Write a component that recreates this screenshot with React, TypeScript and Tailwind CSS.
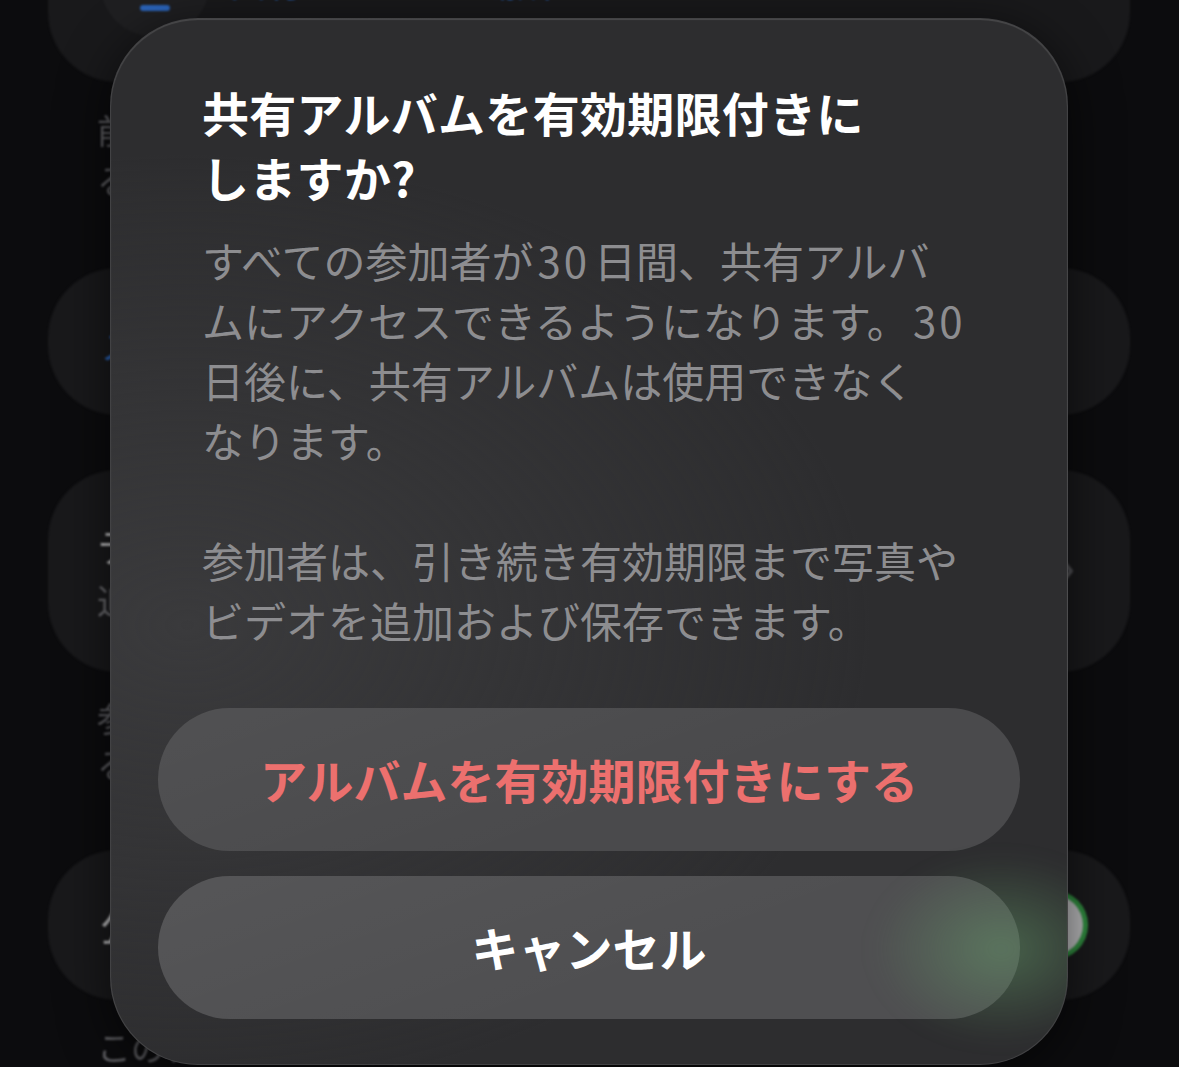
import React from 'react';

const jp = "font-['Noto_Sans_CJK_JP','Noto_Sans',sans-serif]";

const bodySecond = ['参加者は、引き続き有効期限まで写真や', 'ビデオを追加および保存できます。'];

function Background() {
  return (
    <div className="flex flex-col ml-[48px] mr-[49px] blur-[1px]">
      {/* Card 1, mostly off screen */}
      <div className="mt-[-80px] h-[162px] rounded-[70px] bg-[#19191b] flex items-start gap-5 pl-[52px] pt-[7px]">
        <div className="w-[110px] h-[110px] rounded-full bg-[#1f1f21] flex items-center justify-center">
          <div className="w-[30px] h-[6px] mt-[52px] rounded bg-[#2a63b8]" />
        </div>
        <span className="mt-[34px] text-[36px] leading-[40px] text-[#2a63b8] whitespace-nowrap">共有アルバムの場所</span>
      </div>

      {/* Footer 1 */}
      <div className="mt-[23px] pl-[49px] text-[34px] leading-[50px] text-[#5e5e62] whitespace-nowrap">
        <p>前回の共有から参加者が変更されてい</p>
        <p>る場合があります。</p>
      </div>

      {/* Card 2 */}
      <div className="mt-[63px] h-[147px] rounded-[70px] bg-[#19191b] flex items-center pl-[52px]">
        <span className="text-[40px] text-[#2a63b8] whitespace-nowrap">メンバーを追加</span>
      </div>

      {/* Card 3 */}
      <div className="mt-[55px] h-[202px] rounded-[70px] bg-[#19191b] flex items-center justify-between pl-[49px] pr-[56px]">
        <div className="flex flex-col whitespace-nowrap">
          <span className="text-[40px] leading-[58px] text-[#bdbdbf]">テーマ</span>
          <span className="text-[34px] leading-[52px] text-[#6a6a6e]">追加された写真を表示</span>
        </div>
        <svg width="14" height="26" viewBox="0 0 14 26" fill="none">
          <path d="M3 3l8 10-8 10" stroke="#505054" strokeWidth="4" strokeLinecap="round" strokeLinejoin="round" />
        </svg>
      </div>

      {/* Footer 2 */}
      <div className="mt-[23px] pl-[49px] text-[34px] leading-[46px] text-[#5e5e62] whitespace-nowrap">
        <p>参加者は写真やビデオを追加できます</p>
        <p>る</p>
      </div>

      {/* Card 4 */}
      <div className="mt-[63px] h-[150px] rounded-[70px] bg-[#19191b] flex items-center justify-between pl-[52px] pr-[42px]">
        <span className="text-[40px] text-[#bdbdbf] whitespace-nowrap">公開Webサイト</span>
        <div className="w-[128px] h-[70px] rounded-full bg-[#2f8a3e] flex items-center justify-end pr-[5px]">
          <div className="w-[60px] h-[60px] rounded-full bg-[#b8b8ba]" />
        </div>
      </div>

      {/* Footer 3 */}
      <div className="mt-[24px] pl-[49px] text-[34px] leading-[46px] text-[#5e5e62] whitespace-nowrap">
        <p>このアルバムを公開すると</p>
      </div>
    </div>
  );
}

function Num({ children }: { children: React.ReactNode }) {
  return <span className="tracking-[3px] px-[4px]">{children}</span>;
}

function Dialog() {
  return (
    <div
      className={`absolute left-[110px] top-[18px] w-[958px] h-[1047px] rounded-[88px] border border-white/[0.1] bg-[#2d2d2f] bg-[image:radial-gradient(ellipse_at_8%_58%,#3a3a3c,transparent_55%)] shadow-[inset_0_1px_1px_rgba(255,255,255,0.14),0_10px_50px_rgba(0,0,0,0.6)] overflow-hidden flex flex-col px-[47px] pt-[60px] ${jp}`}
    >
      <div className="px-[44px]">
        <h1 className="text-[47px] leading-[65px] font-bold text-white tracking-[0.3px] whitespace-nowrap">
          <span className="block">共有アルバムを有効期限付きに</span>
          <span className="block">しますか?</span>
        </h1>
        <div className="mt-[21px] text-[42px] leading-[60px] text-[#8d8d90] whitespace-nowrap">
          <p>
            <span className="block">
              すべての参加者が<Num>30</Num>日間、共有アルバ
            </span>
            <span className="block">
              ムにアクセスできるようになります。<Num>30</Num>
            </span>
            <span className="block">日後に、共有アルバムは使用できなく</span>
            <span className="block">なります。</span>
          </p>
          <p className="mt-[60px]">
            {bodySecond.map((line) => (
              <span key={line} className="block">
                {line}
              </span>
            ))}
          </p>
        </div>
      </div>

      <div className="mt-[58px] flex flex-col gap-[25px]">
        <button className="h-[143px] rounded-full bg-[#4a4a4c] bg-[image:linear-gradient(160deg,rgba(255,255,255,0.04),transparent_60%)] text-[47px] font-bold text-[#ec706e] whitespace-nowrap">
          アルバムを有効期限付きにする
        </button>
        <button className="h-[143px] rounded-full bg-[#4f4f51] bg-[image:linear-gradient(160deg,rgba(255,255,255,0.04),transparent_60%)] text-[47px] font-semibold text-white whitespace-nowrap">
          キャンセル
        </button>
      </div>

      {/* green glow from the switch behind */}
      <div className="pointer-events-none absolute left-[760px] top-[835px] w-[260px] h-[190px] rounded-full bg-[image:radial-gradient(closest-side,rgba(105,165,110,0.45),rgba(105,165,110,0.15)_65%,transparent)] blur-[10px]" />
    </div>
  );
}

export default function App() {
  return (
    <div className={`relative w-[1179px] h-[1067px] overflow-hidden bg-[#0c0c0e] ${jp}`}>
      <Background />
      <Dialog />
    </div>
  );
}
